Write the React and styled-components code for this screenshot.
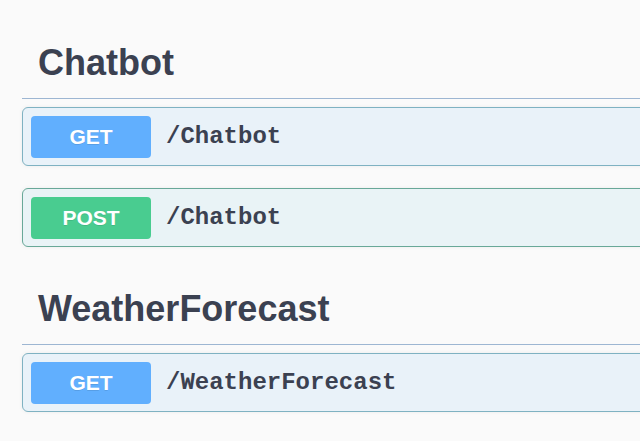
import * as React from "react"
import styled, { createGlobalStyle } from "styled-components"

const GlobalStyle = createGlobalStyle`
  html, body {
    margin: 0;
    padding: 0;
    background: #fafafa;
    overflow: hidden;
  }
  * {
    box-sizing: border-box;
  }
`

const methods = {
  get: { badge: "#61affe", bg: "#e9f2f9", border: "#7fb2c2" },
  post: { badge: "#49cc90", bg: "#e9f3f6", border: "#68a898" },
}

const StyledPage = styled.div`
  padding: 27px 0 0 22px;
  margin-right: -40px;
  font-family: "Liberation Sans", Arial, sans-serif;
  color: #3b4151;
`
const StyledSection = styled.section`
  padding-bottom: 4px;
`
const StyledTag = styled.h3`
  margin: 0 0 8px;
  padding: 15px 30px 15px 16px;
  font-size: 36px;
  font-weight: 700;
  line-height: 41px;
  color: #3b4151;
  border-bottom: 1px solid #9db6d2;
`
const StyledOpblock = styled.div`
  display: flex;
  align-items: center;
  margin: 0 0 22px;
  padding: 7.5px 8px;
  border: 1px solid ${props => methods[props.method].border};
  border-radius: 6px;
  background: ${props => methods[props.method].bg};
  box-shadow: 0 0 4px rgba(0, 0, 0, 0.06);
`
const StyledMethod = styled.span`
  width: 120px;
  height: 42px;
  display: flex;
  align-items: center;
  justify-content: center;
  border-radius: 4px;
  background: ${props => methods[props.method].badge};
  color: #fff;
  font-size: 21px;
  font-weight: 700;
  text-shadow: 0 1px 0 rgba(0, 0, 0, 0.1);
`
const StyledPath = styled.span`
  padding: 0 15px;
  font-family: "Liberation Mono", "Courier New", monospace;
  font-size: 24px;
  font-weight: 700;
  color: #3b4151;
`

const sections = [
  {
    name: "Chatbot",
    ops: [
      { method: "get", path: "/Chatbot" },
      { method: "post", path: "/Chatbot" },
    ],
  },
  {
    name: "WeatherForecast",
    ops: [{ method: "get", path: "/WeatherForecast" }],
  },
]

const App = () => {
  return (
    <>
      <GlobalStyle />
      <StyledPage>
        {sections.map(section => (
          <StyledSection key={section.name}>
            <StyledTag>{section.name}</StyledTag>
            {section.ops.map(op => (
              <StyledOpblock key={op.method + op.path} method={op.method}>
                <StyledMethod method={op.method}>{op.method.toUpperCase()}</StyledMethod>
                <StyledPath>{op.path}</StyledPath>
              </StyledOpblock>
            ))}
          </StyledSection>
        ))}
      </StyledPage>
    </>
  )
}

export default App
